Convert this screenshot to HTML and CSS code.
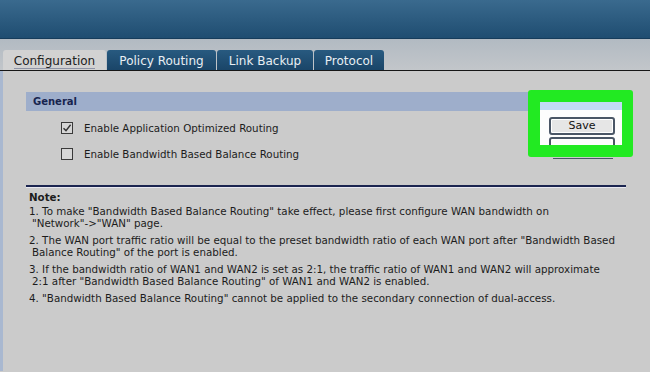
FILE: index.html
```html
<!DOCTYPE html>
<html lang="en">
<head>
    <meta charset="UTF-8">
    <title>Load Balancing</title>
    <link rel="stylesheet" href="styles.css">
</head>
<body>
<div class="header"></div>
<ul class="tabs">
    <li class="tab active"><span>Configuration</span></li>
    <li class="tab">Policy Routing</li>
    <li class="tab">Link Backup</li>
    <li class="tab">Protocol</li>
</ul>
<div class="content">
    <div class="panel">
        <div class="panel-title">General</div>
        <div class="options">
            <label class="option">
                <span class="check checked">
                    <svg width="10" height="10" viewBox="0 0 10 10"><path d="M1.5 5.2 L4 7.6 L8.6 1.8" fill="none" stroke="#333" stroke-width="1.4"/></svg>
                </span>
                Enable Application Optimized Routing
            </label>
            <label class="option">
                <span class="check"></span>
                Enable Bandwidth Based Balance Routing
            </label>
        </div>
        <div class="highlight">
            <div class="window">
                <div class="window-strip"></div>
                <div class="btn">Save</div>
                <div class="btn btn-hidden"></div>
            </div>
            <div class="peek"></div>
        </div>
    </div>
    <div class="rule"></div>
    <div class="notes">
        <div class="notes-title">Note:</div>
        <div class="note">1. To make "Bandwidth Based Balance Routing" take effect, please first configure WAN bandwidth on<br>"Network"-&gt;"WAN" page.</div>
        <div class="note">2. The WAN port traffic ratio will be equal to the preset bandwidth ratio of each WAN port after "Bandwidth Based<br>Balance Routing" of the port is enabled.</div>
        <div class="note">3. If the bandwidth ratio of WAN1 and WAN2 is set as 2:1, the traffic ratio of WAN1 and WAN2 will approximate<br>2:1 after "Bandwidth Based Balance Routing" of WAN1 and WAN2 is enabled.</div>
        <div class="note">4. "Bandwidth Based Balance Routing" cannot be applied to the secondary connection of dual-access.</div>
    </div>
</div>
</body>
</html>
```

FILE: styles.css
```css
body, ul, li {
    margin: 0;
    padding: 0;
    list-style: none;
}

body {
    width: 650px;
    height: 372px;
    overflow: hidden;
    background-color: #cbcbcb;
    font-family: "DejaVu Sans", Verdana, sans-serif;
    color: #1c1c1c;
}

.header {
    height: 38px;
    background: linear-gradient(#3a6a8e, #1f4d71);
    border-bottom: 1px solid #163c5b;
}

.tabs {
    display: flex;
    height: 20px;
    padding: 11px 0 0 3px;
    background: linear-gradient(#b2bac2, #c2c6ca);
    border-bottom: 1px solid #161616;
}

.tab {
    width: 109px;
    margin-right: 1px;
    background: linear-gradient(#285a80, #1a4568);
    border-radius: 3px 3px 0 0;
    color: #e9eef3;
    font-size: 12px;
    line-height: 22px;
    text-align: center;
}

.tab:nth-child(3) {
    width: 96px;
}

.tab:nth-child(4) {
    width: 70px;
}

.tab.active {
    width: 103px;
    background: #d2d2d2;
    color: #202020;
}

.tab.active span {
    border-bottom: 1px solid #8f94a6;
}

.content {
    height: 279px;
    border-left: 3px solid #a9b8d0;
    padding: 21px 24px 0 23px;
}

.panel {
    position: relative;
}

.panel-title {
    height: 19px;
    padding-left: 7px;
    background-color: #9eaecb;
    color: #17244f;
    font-size: 10px;
    font-weight: bold;
    line-height: 19px;
}

.options {
    padding: 7px 0 0 35px;
}

.option {
    display: flex;
    align-items: center;
    height: 20px;
    margin-bottom: 6px;
    font-size: 10.3px;
}

.check {
    display: flex;
    align-items: center;
    justify-content: center;
    width: 10px;
    height: 10px;
    margin-right: 11px;
    border: 1px solid #3a3a3a;
    background-color: #d6d6d6;
}

.highlight {
    position: absolute;
    top: -2px;
    left: 502px;
    width: 82px;
    height: 43px;
    padding: 12px 11px 12px 12px;
    border-radius: 3px;
    background-color: #22ea22;
}

.window {
    height: 43px;
    overflow: hidden;
    background-color: #fdfdfd;
}

.window-strip {
    height: 8px;
    background-color: #c3dbf6;
}

.btn {
    width: 62px;
    height: 14px;
    margin: 7px 0 0 9px;
    border: 2px solid #4a5666;
    border-radius: 3px;
    background-color: #e6e6e6;
    box-shadow: inset 0 0 0 1px #ffffff;
    color: #111;
    font-size: 11px;
    line-height: 14px;
    text-align: center;
}

.btn-hidden {
    height: 20px;
    margin-top: 2px;
    background-color: #fdfdfd;
}

.peek {
    width: 60px;
    height: 1px;
    margin: 12px 0 0 13px;
    border-bottom: 1px solid #4a5666;
}

.rule {
    height: 2px;
    margin-top: 21px;
    background-color: #1b2550;
    border-bottom: 1px solid #e8e8f0;
}

.notes {
    padding: 3px 0 0 3px;
    font-size: 10.3px;
    line-height: 12px;
}

.notes-title {
    font-weight: bold;
    margin-bottom: 2px;
}

.note {
    padding-left: 3px;
    text-indent: -3px;
    margin-bottom: 5px;
}
```
